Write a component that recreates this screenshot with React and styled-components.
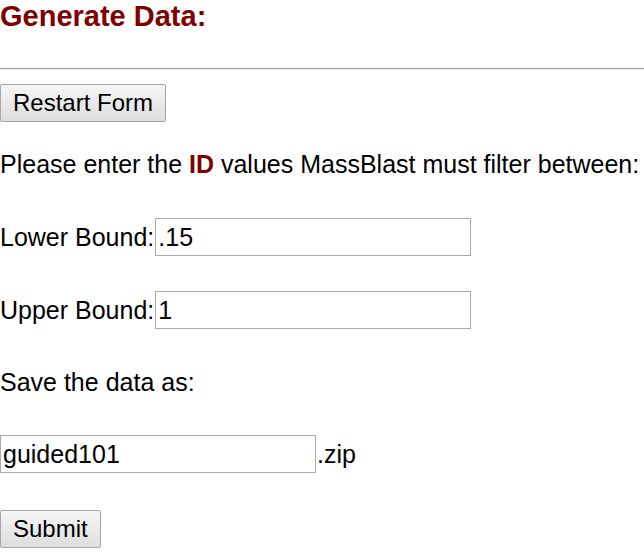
import { createGlobalStyle } from "styled-components";
import styled from "styled-components";

const GlobalStyle = createGlobalStyle`
  body {
    margin: 0;
    background: #ffffff;
    font-family: "Liberation Sans", Arial, sans-serif;
    font-size: 25px;
    color: #000000;
  }
`;

const Page = styled.div`
  display: flex;
  flex-direction: column;
  align-items: flex-start;
`;

const Title = styled.h3`
  margin: 0;
  font-size: 29px;
  font-weight: bold;
  color: #800000;
  line-height: 33px;
`;

const Rule = styled.hr`
  align-self: stretch;
  margin: 35px 0 0;
  height: 0;
  border: 0;
  border-top: 1px solid #9a9a9a;
  border-bottom: 1px solid #eeeeee;
`;

const Button = styled.button`
  margin-top: ${(p) => p.$top}px;
  height: 38px;
  padding: 0 12px;
  font-family: inherit;
  font-size: 24px;
  color: #000;
  background: linear-gradient(#f6f6f6, #dddddd);
  border: 1px solid #a6a6a6;
  border-radius: 2px;
`;

const Text = styled.div`
  margin-top: ${(p) => p.$top}px;
  line-height: 28px;
  white-space: nowrap;
`;

const Mark = styled.b`
  color: #800000;
`;

const Row = styled.div`
  margin-top: ${(p) => p.$top}px;
  display: flex;
  align-items: center;
  gap: 1px;
  line-height: 28px;
`;

const Field = styled.input`
  box-sizing: border-box;
  width: 316px;
  height: 38px;
  padding: 0 2px;
  font-family: inherit;
  font-size: 25px;
  color: #000;
  border: 1px solid #aaaaaa;
  border-radius: 0;
  outline: none;
`;

export default function App() {
  return (
    <>
      <GlobalStyle />
      <Page>
        <Title>Generate Data:</Title>
        <Rule />
        <Button $top={14}>Restart Form</Button>
        <Text $top={28}>
          Please enter the <Mark>ID</Mark> values MassBlast must filter between:
        </Text>
        <Row $top={40}>
          <span>Lower Bound:</span>
          <Field defaultValue=".15" />
        </Row>
        <Row $top={35}>
          <span>Upper Bound:</span>
          <Field defaultValue="1" />
        </Row>
        <Text $top={39}>Save the data as:</Text>
        <Row $top={39}>
          <Field defaultValue="guided101" />
          <span>.zip</span>
        </Row>
        <Button $top={37}>Submit</Button>
      </Page>
    </>
  );
}
